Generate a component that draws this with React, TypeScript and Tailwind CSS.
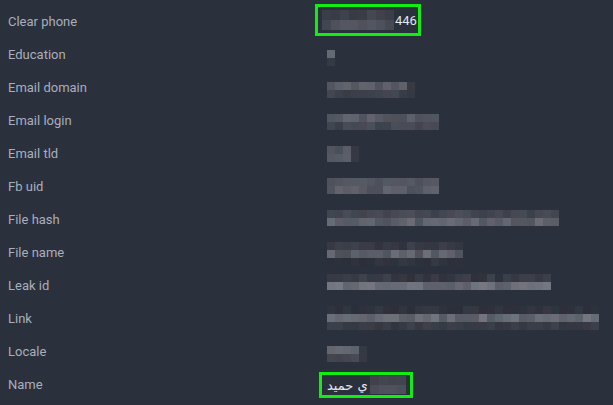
import React from "react";

type BlockRow = { base: number; spread: number };
type Pix = { cols: number; rows: BlockRow[]; seed: number; w?: number; h?: number; lastDark?: boolean };

function rng(seed: number) {
  let s = seed;
  return () => {
    s = (s * 16807) % 2147483647;
    return s / 2147483647;
  };
}

function Pixels({ p }: { p: Pix }) {
  const r = rng(p.seed * 7919 + 13);
  const w = p.w ?? 8;
  const h = p.h ?? 8;
  return (
    <div className="flex flex-col">
      {p.rows.map((row, ri) => (
        <div key={ri} className="flex">
          {Array.from({ length: p.cols }).map((_, ci) => {
            let v = row.base + (r() - 0.5) * 2 * row.spread;
            if (p.lastDark && ci === p.cols - 1) v = Math.min(v, 54);
            v = Math.max(44, Math.min(140, Math.round(v)));
            const hue = Math.round((r() - 0.5) * 6);
            const c = `rgb(${v + hue},${v + 3},${v + 13})`;
            return <div key={ci} style={{ width: w, height: h, background: c }} />;
          })}
        </div>
      ))}
    </div>
  );
}

type Row = { label: string; pt: string; pix?: Pix; special?: "phone" | "name" };

const rows: Row[] = [
  { label: "Clear phone", pt: "pt-0", special: "phone" },
  { label: "Education", pt: "pt-[13px]", pix: { cols: 1, seed: 2, rows: [{ base: 106, spread: 4 }, { base: 58, spread: 3 }] } },
  { label: "Email domain", pt: "pt-[12px]", pix: { cols: 11, seed: 3, lastDark: true, rows: [{ base: 88, spread: 10 }, { base: 62, spread: 6 }] } },
  { label: "Email login", pt: "pt-[11px]", pix: { cols: 14, seed: 4, rows: [{ base: 88, spread: 12 }, { base: 66, spread: 10 }] } },
  { label: "Email tld", pt: "pt-[10px]", pix: { cols: 4, seed: 5, lastDark: true, rows: [{ base: 84, spread: 8 }, { base: 84, spread: 10 }] } },
  { label: "Fb uid", pt: "pt-[9px]", pix: { cols: 14, seed: 6, rows: [{ base: 80, spread: 8 }, { base: 88, spread: 12 }] } },
  { label: "File hash", pt: "pt-[8px]", pix: { cols: 29, seed: 7, rows: [{ base: 68, spread: 8 }, { base: 92, spread: 14 }] } },
  { label: "File name", pt: "pt-[7px]", pix: { cols: 17, seed: 8, rows: [{ base: 54, spread: 8 }, { base: 90, spread: 18 }, { base: 48, spread: 6 }] } },
  { label: "Leak id", pt: "pt-[6px]", pix: { cols: 28, seed: 9, rows: [{ base: 54, spread: 9 }, { base: 104, spread: 14 }] } },
  { label: "Link", pt: "pt-[5px]", pix: { cols: 34, seed: 10, rows: [{ base: 48, spread: 6 }, { base: 100, spread: 14 }, { base: 56, spread: 6 }] } },
  { label: "Locale", pt: "pt-[12px]", pix: { cols: 5, seed: 11, lastDark: true, rows: [{ base: 92, spread: 16 }, { base: 66, spread: 6 }] } },
  { label: "Name", pt: "pt-[5px]", special: "name" },
];

const phonePix: Pix = { cols: 8, seed: 21, w: 9, h: 10, rows: [{ base: 62, spread: 7 }, { base: 74, spread: 12 }] };
const namePix: Pix = { cols: 4, seed: 22, w: 9, h: 9, rows: [{ base: 64, spread: 6 }, { base: 74, spread: 6 }] };

export default function App() {
  return (
    <div
      className="w-[613px] h-[405px] overflow-hidden bg-[#2b303d] pt-[4px]"
      style={{ fontFamily: "Roboto, 'Noto Sans', sans-serif" }}
    >
      {rows.map((row) => (
        <div key={row.label} className="flex h-[33px]">
          <div className="w-[315px] shrink-0 pl-[8px] mt-[2px] self-center text-[13px] leading-none text-[#a8afbb]">
            {row.label}
          </div>
          {row.special === "phone" && (
            <div className="flex h-[32px] w-[106px] items-center border-[3px] border-[#12ee12] pl-[4px]">
              <Pixels p={phonePix} />
              <span className="ml-[1px] mt-[1px] text-[13px] leading-none text-[#e3e7ee]">446</span>
            </div>
          )}
          {row.special === "name" && (
            <div className={`ml-[4px] ${row.pt}`}>
              <div className="flex h-[26px] w-[94px] items-center border-[3px] border-[#12ee12] pl-[5px]">
                <span
                  dir="rtl"
                  className="text-[13px] leading-none text-[#e3e7ee]"
                  style={{ fontFamily: "'DejaVu Sans', sans-serif" }}
                >
                  ي حميد
                </span>
                <div className="ml-[2px]">
                  <Pixels p={namePix} />
                </div>
              </div>
            </div>
          )}
          {row.pix && (
            <div className={`pl-[12px] ${row.pt}`}>
              <Pixels p={row.pix} />
            </div>
          )}
        </div>
      ))}
    </div>
  );
}
